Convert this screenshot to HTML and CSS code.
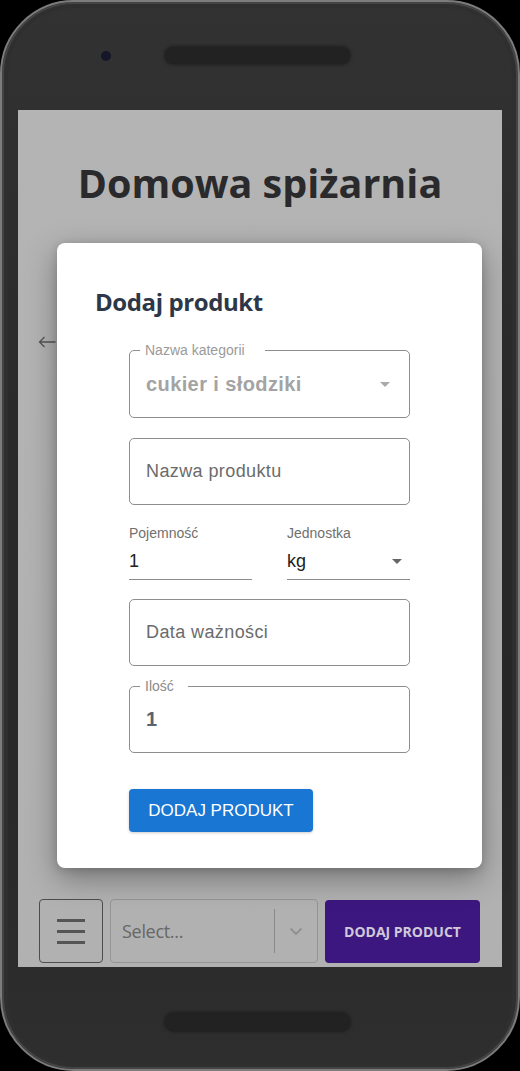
FILE: index.html
```html
<!DOCTYPE html>
<html lang="pl">
<head>
<meta charset="utf-8">
<title>Domowa spiżarnia</title>
<link rel="stylesheet" href="styles.css">
</head>
<body>
<div class="phone">
  <div class="top-hw">
    <span class="camera"></span>
    <span class="speaker"></span>
  </div>
  <div class="screen">
    <h1 class="title">Domowa spiżarnia</h1>
    <div class="back">
      <svg width="18" height="12" viewBox="0 0 18 12"><path d="M17.5 6H1.5M6.5 1L1.5 6l5 5" fill="none" stroke="#555" stroke-width="1.3"/></svg>
    </div>
    <div class="bottom-bar">
      <div class="menu-btn"><span></span><span></span><span></span></div>
      <div class="select">
        <span class="select-text">Select...</span>
        <span class="select-sep"></span>
        <span class="select-chev">
          <svg width="14" height="9" viewBox="0 0 14 9"><path d="M1.5 1.5l5.5 5.5 5.5-5.5" fill="none" stroke="#8f8f8f" stroke-width="1.8"/></svg>
        </span>
      </div>
      <div class="add-btn">DODAJ PRODUCT</div>
    </div>

    <div class="modal">
      <h2 class="modal-title">Dodaj produkt</h2>
      <div class="form">
        <div class="outlined">
          <span class="float-label wide">Nazwa kategorii</span>
          <span class="value-muted">cukier i słodziki</span>
          <span class="caret light"></span>
        </div>
        <div class="outlined gap20">
          <span class="placeholder">Nazwa produktu</span>
        </div>
        <div class="row">
          <div class="std">
            <div class="std-label">Pojemność</div>
            <div class="std-value">1</div>
          </div>
          <div class="std">
            <div class="std-label">Jednostka</div>
            <div class="std-value">kg<span class="caret dark"></span></div>
          </div>
        </div>
        <div class="outlined gap19">
          <span class="placeholder">Data ważności</span>
        </div>
        <div class="outlined gap20">
          <span class="float-label narrow">Ilość</span>
          <span class="value-strong">1</span>
        </div>
        <div class="submit">DODAJ PRODUKT</div>
      </div>
    </div>
  </div>
  <div class="bottom-hw">
    <span class="speaker"></span>
  </div>
</div>
</body>
</html>
```
FILE: styles.css
```css
* { box-sizing: border-box; }
html, body { margin: 0; background: #000; }
body { width: 520px; height: 1071px; overflow: hidden; }

.phone {
  width: 520px;
  height: 1071px;
  border-radius: 74px;
  border: 2px solid #7c7c7c;
  background: linear-gradient(180deg, #323232 0%, #2a2a2a 40%, #282828 70%, #2e2e2e 100%);
  box-shadow: inset 0 0 0 2px #444, inset 0 0 0 6px #2f2f2f;
  padding: 0 16px;
  display: flex;
  flex-direction: column;
}

.top-hw {
  height: 108px;
  display: flex;
  align-items: center;
  padding-left: 83px;
  padding-bottom: 1px;
}
.camera {
  width: 10px;
  height: 10px;
  border-radius: 50%;
  background: #16162a;
}
.top-hw .speaker { margin-left: 54px; }
.speaker {
  display: block;
  width: 185px;
  height: 17px;
  border-radius: 9px;
  background: #222;
  box-shadow: 0 0 3px 1px rgba(20,20,20,.6);
}

.screen {
  height: 857px;
  background: linear-gradient(180deg, #b4b4b4 0%, #b1b1b1 100%);
  position: relative;
  display: flex;
  flex-direction: column;
}
.title {
  margin: 50px 0 0;
  font: 700 39.5px/46px "Open Sans", sans-serif;
  text-align: center;
  color: #2a2a2c;
}
.back {
  margin: 130px 0 0 20px;
  width: 18px;
  height: 12px;
  line-height: 0;
}

.bottom-bar {
  margin-top: auto;
  padding: 0 0 4px 21px;
  display: flex;
  gap: 7px;
  height: 68px;
}
.menu-btn {
  width: 64px;
  height: 64px;
  border: 1px solid #4d4d4d;
  border-radius: 4px;
  display: flex;
  flex-direction: column;
  align-items: center;
  justify-content: center;
  gap: 8px;
}
.menu-btn span {
  display: block;
  width: 28px;
  height: 3px;
  background: #555;
}
.select {
  width: 208px;
  height: 64px;
  border: 1px solid #959595;
  border-radius: 4px;
  display: flex;
  align-items: center;
}
.select-text {
  flex: 1;
  padding-left: 11px;
  font: 400 18px "Open Sans", sans-serif;
  letter-spacing: -0.3px;
  color: #676767;
}
.select-sep {
  width: 1px;
  height: 44px;
  background: #8a8a8a;
}
.select-chev {
  width: 42px;
  display: flex;
  justify-content: center;
  line-height: 0;
}
.add-btn {
  width: 155px;
  height: 63px;
  margin-top: 1px;
  border-radius: 4px;
  background: #3c177f;
  color: #cfc9da;
  font: 700 14px "Open Sans", sans-serif;
  display: flex;
  align-items: center;
  justify-content: center;
}

.modal {
  position: absolute;
  left: 39px;
  top: 133px;
  width: 425px;
  height: 625px;
  background: #fff;
  border-radius: 8px;
  box-shadow: 0 10px 30px rgba(0,0,0,.35), 0 2px 8px rgba(0,0,0,.15);
  padding: 44px 0 0 38px;
}
.modal-title {
  margin: 0;
  font: 700 24px/30px "Open Sans", sans-serif;
  letter-spacing: -0.4px;
  color: #2d3748;
}
.form {
  margin: 33px 0 0 34px;
  width: 281px;
  display: flex;
  flex-direction: column;
  font-family: "Liberation Sans", Arial, sans-serif;
}
.outlined {
  position: relative;
  height: 68px;
  border: 1px solid #8e8e8e;
  border-radius: 5px;
  display: flex;
  align-items: center;
  padding-left: 16px;
}
.gap20 { margin-top: 20px; height: 67px; }
.gap19 { margin-top: 19px; height: 67px; }
.float-label {
  position: absolute;
  top: -9px;
  left: 10px;
  background: #fff;
  font-size: 14px;
  line-height: 16px;
  color: #9a9a9a;
}
.float-label.wide { padding: 0 20px 0 5px; }
.float-label.narrow { padding: 0 14px 0 5px; color: #8a8a8a; }
.value-muted {
  font-weight: 700;
  font-size: 20px;
  letter-spacing: 0.4px;
  color: #a3a3a3;
}
.value-strong {
  font-weight: 700;
  font-size: 20px;
  color: #5a6372;
}
.placeholder {
  font-size: 18px;
  letter-spacing: 0.4px;
  color: #6b6b6b;
}
.caret {
  width: 0;
  height: 0;
  border-left: 5px solid transparent;
  border-right: 5px solid transparent;
  border-top: 5px solid #aaa;
  margin-left: auto;
}
.caret.light { margin-right: 19px; }
.caret.dark { border-top-color: #666; margin-right: 8px; }

.row {
  margin-top: 20px;
  display: grid;
  grid-template-columns: 123px 123px;
  column-gap: 35px;
}
.std-label {
  font-size: 14px;
  line-height: 16px;
  color: #707070;
}
.std-value {
  margin-top: 8px;
  height: 31px;
  padding-bottom: 6px;
  line-height: 24px;
  font-size: 18px;
  color: #222;
  border-bottom: 1px solid #8c8c8c;
  display: flex;
  align-items: center;
}

.submit {
  margin-top: 36px;
  width: 184px;
  height: 43px;
  background: #1976d2;
  color: #fff;
  border-radius: 4px;
  font-size: 17px;
  display: flex;
  align-items: center;
  justify-content: center;
  box-shadow: 0 1px 3px rgba(0,0,0,.2);
}

.bottom-hw {
  flex: 1;
  padding: 46px 0 0 147px;
  display: flex;
}
.bottom-hw .speaker { height: 18px; }
```
